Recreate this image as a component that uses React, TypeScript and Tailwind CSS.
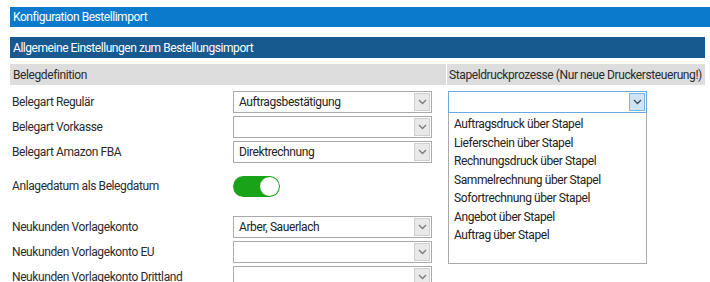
import React from "react";

const font = { fontFamily: "Roboto, 'Liberation Sans', sans-serif" };

function Chevron({ dark }: { dark?: boolean }) {
  return (
    <svg width="9" height="6" viewBox="0 0 9 6">
      <path d="M1 1 L4.5 4.5 L8 1" fill="none" stroke={dark ? "#3a4a5a" : "#7a7a7a"} strokeWidth="1.3" />
    </svg>
  );
}

function FakeSelect({ value, focused }: { value?: string; focused?: boolean }) {
  return (
    <div
      className={`flex h-[22px] w-[199px] items-center border ${
        focused ? "border-[#6fa8dc]" : "border-[#a9a9a9]"
      } bg-white`}
    >
      <span className="flex-1 truncate pl-[5px] text-[12px] tracking-[-0.4px] text-[#222]">{value}</span>
      <span
        className={`mr-[1px] flex h-[18px] w-[16px] items-center justify-center border ${
          focused ? "border-[#7db4e6] bg-[#cfe3f6]" : "border-[#cfcfcf] bg-[#e9e9e9]"
        }`}
      >
        <Chevron dark={focused} />
      </span>
    </div>
  );
}

function Row({ label, value }: { label: string; value?: string }) {
  return (
    <div className="flex h-[22px] items-center">
      <span className="w-[223px] pl-[2px] text-[12px] tracking-[-0.4px] text-[#2b2b2b]">{label}</span>
      <FakeSelect value={value} />
    </div>
  );
}

const stapel = [
  "Auftragsdruck über Stapel",
  "Lieferschein über Stapel",
  "Rechnungsdruck über Stapel",
  "Sammelrechnung über Stapel",
  "Sofortrechnung über Stapel",
  "Angebot über Stapel",
  "Auftrag über Stapel",
];

export default function App() {
  return (
    <div className="h-[282px] w-[710px] overflow-hidden bg-white pl-[10px] pt-[7px]" style={font}>
      <div className="flex h-[20px] items-center bg-[#0b79cc] pl-[3px] text-[12px] tracking-[-0.45px] text-white">
        Konfiguration Bestellimport
      </div>
      <div className="mr-[5px] mt-[10px] flex h-[21px] items-center bg-[#175a90] pl-[3px] text-[12px] tracking-[-0.45px] text-white">
        Allgemeine Einstellungen zum Bestellungsimport
      </div>
      <div className="mr-[5px] mt-[6px] flex h-[21px] bg-[#dddddd] text-[12px] tracking-[-0.4px] text-[#2b2b2b]">
        <div className="flex w-[436px] items-center pl-[3px]">Belegdefinition</div>
        <div className="flex flex-1 items-center whitespace-nowrap border-l border-white pl-[2px]">
          Stapeldruckprozesse (Nur neue Druckersteuerung!)
        </div>
      </div>
      <div className="mt-[6px] flex">
        <div className="flex w-[438px] flex-col">
          <div className="flex flex-col gap-[3px]">
            <Row label="Belegart Regulär" value="Auftragsbestätigung" />
            <Row label="Belegart Vorkasse" />
            <Row label="Belegart Amazon FBA" value="Direktrechnung" />
          </div>
          <div className="mt-[12px] flex h-[22px] items-center">
            <span className="w-[223px] pl-[2px] text-[12px] tracking-[-0.4px] text-[#2b2b2b]">Anlagedatum als Belegdatum</span>
            <span className="flex h-[21px] w-[47px] items-center justify-end rounded-full bg-[#19a319] pr-[1px]">
              <span className="h-[19px] w-[19px] rounded-full bg-white" />
            </span>
          </div>
          <div className="mt-[19px] flex flex-col gap-[3px]">
            <Row label="Neukunden Vorlagekonto" value="Arber, Sauerlach" />
            <Row label="Neukunden Vorlagekonto EU" />
            <Row label="Neukunden Vorlagekonto Drittland" />
          </div>
        </div>
        <div className="flex flex-col">
          <FakeSelect focused />
          <div className="h-[151px] w-[199px] border border-t-0 border-[#a9a9a9] pt-[2px]">
            {stapel.map((s) => (
              <div key={s} className="pl-[5px] text-[12px] leading-[18.5px] tracking-[-0.4px] text-[#222]">
                {s}
              </div>
            ))}
          </div>
        </div>
      </div>
    </div>
  );
}
